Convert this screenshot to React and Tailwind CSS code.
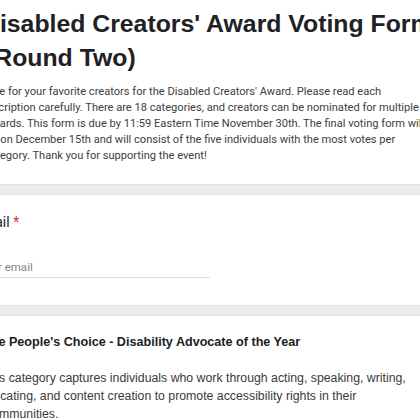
export default function App() {
  // each line keeps its own indent so the crop matches the screenshot
  const intro = [
    { text: "Vote for your favorite creators for the Disabled Creators' Award. Please read each", cls: "-ml-[17.5px]" },
    { text: "description carefully. There are 18 categories, and creators can be nominated for multiple", cls: "-ml-[19.5px]" },
    { text: "awards. This form is due by 11:59 Eastern Time November 30th. The final voting form will", cls: "-ml-[14.5px]" },
    { text: "open on December 15th and will consist of the five individuals with the most votes per", cls: "-ml-[27px]" },
    { text: "category. Thank you for supporting the event!", cls: "-ml-[15.5px]" },
  ];

  const category = [
    { text: "This category captures individuals who work through acting, speaking, writing,", cls: "-ml-[18px]" },
    { text: "advocating, and content creation to promote accessibility rights in their", cls: "-ml-[26.5px]" },
    { text: "communities.", cls: "-ml-[14px]" },
  ];

  return (
    <div className="w-[420px] h-[420px] overflow-hidden bg-white">
      {/* Header */}
      <div className="pt-[7px] pb-[20px] font-['Liberation_Sans',Arial,sans-serif]">
        <h1 className="text-[24.8px] leading-[34px] font-bold text-[#202124] whitespace-nowrap">
          <span className="block -ml-[18px]">Disabled Creators' Award Voting Form</span>
          <span className="block -ml-[14px]">(Round Two)</span>
        </h1>
        <div className="mt-[9px] font-['Roboto',sans-serif] text-[11.1px] leading-[16px] text-[#3c4043]">
          {intro.map((line) => (
            <p key={line.text} className={`whitespace-nowrap ${line.cls}`}>
              {line.text}
            </p>
          ))}
        </div>
      </div>

      <div className="h-[11px] bg-[#ececec] border-y border-[#e2e2e2]" />

      {/* Email */}
      <div className="pt-[17px] pb-[27px] font-['Roboto',sans-serif] -ml-[25px]">
        <p className="text-[14px] leading-[20px] text-[#202124]">
          Email <span className="text-[#d93025]">*</span>
        </p>
        <div className="mt-[27px] w-[235px] border-b border-[#dadce0] pb-[2px]">
          <p className="text-[11.5px] leading-[16px] text-[#80868b] pl-[3.5px]">Your email</p>
        </div>
      </div>

      <div className="h-[11px] bg-[#ececec] border-y border-[#e2e2e2]" />

      {/* Category */}
      <div className="pt-[16px] font-['Liberation_Sans',Arial,sans-serif]">
        <p className="-ml-[17px] text-[12.6px] leading-[20px] font-bold text-[#202124] whitespace-nowrap">
          The People's Choice - Disability Advocate of the Year
        </p>
        <div className="mt-[17px] text-[12.3px] leading-[18px] text-[#3a3a3a]">
          {category.map((line) => (
            <p key={line.text} className={`whitespace-nowrap ${line.cls}`}>
              {line.text}
            </p>
          ))}
        </div>
      </div>
    </div>
  );
}
